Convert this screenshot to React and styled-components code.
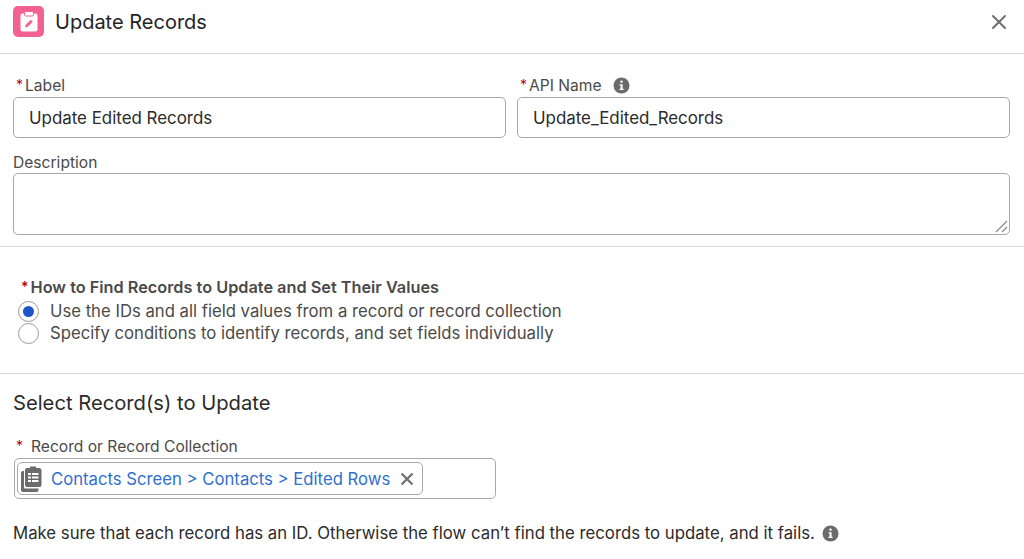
import React from "react";
import styled, { createGlobalStyle } from "styled-components";

const Global = createGlobalStyle`
	html, body {
		margin: 0;
		padding: 0;
		background: #fff;
	}
	body {
		font-family: Inter, "Liberation Sans", sans-serif;
		color: #2b2b2b;
		overflow: hidden;
	}
`;

const Page = styled.div`
	width: 1024px;
	height: 559px;
	overflow: hidden;
	background: #fff;
`;

const Header = styled.header`
	height: 54px;
	box-sizing: border-box;
	border-bottom: 1px solid #d8d8d8;
	padding: 6px 17px 0 13px;
	display: flex;
	align-items: flex-start;
	gap: 11px;
`;

const IconTile = styled.div`
	width: 31px;
	height: 31px;
	flex: none;
	border-radius: 5px;
	background: #f2618f;
	display: flex;
	align-items: center;
	justify-content: center;
`;

const Title = styled.h1`
	flex: 1;
	margin: 0;
	font-size: 20px;
	font-weight: 400;
	line-height: 33px;
	color: #242424;
`;

const CloseButton = styled.button`
	border: 0;
	background: none;
	padding: 0;
	margin-top: 8px;
	width: 16px;
	height: 16px;
	display: block;
`;

const Section = styled.section`
	padding: ${(p) => p.$padding};
	border-bottom: ${(p) => (p.$divided ? "1px solid #d8d8d8" : "0")};
`;

const FieldRow = styled.div`
	display: grid;
	grid-template-columns: 493px 493px;
	gap: 11px;
	margin-bottom: ${(p) => p.$gap || "0"};
`;

const Label = styled.label`
	display: flex;
	align-items: center;
	height: 22px;
	font-size: 15.6px;
	color: #4a4a4a;
	margin-bottom: ${(p) => p.$gap || "1px"};
`;

const Required = styled.span`
	color: #ba0517;
	font-size: 14px;
	line-height: 1;
	margin-left: 3px;
	margin-right: ${(p) => p.$space || "2px"};
`;

const Input = styled.div`
	height: 41px;
	box-sizing: border-box;
	border: 1px solid #a8a8a8;
	border-radius: 5px;
	padding-left: 15px;
	display: flex;
	align-items: center;
	font-size: 16.9px;
	color: #2b2b2b;
`;

const TextArea = styled.div`
	position: relative;
	width: 997px;
	height: 62px;
	box-sizing: border-box;
	border: 1px solid #a8a8a8;
	border-radius: 5px;
`;

const Grip = styled.svg`
	position: absolute;
	right: 1px;
	bottom: 1px;
`;

const GroupHeading = styled.div`
	display: flex;
	align-items: center;
	height: 20px;
	font-size: 16.3px;
	font-weight: 600;
	color: #4a4a4a;
	margin-left: 5px;
	margin-bottom: 3px;
`;

const RadioRow = styled.div`
	display: flex;
	align-items: center;
	height: 22px;
	gap: 11px;
	padding-left: 5px;
	font-size: 16.7px;
	color: #4a4a4a;
`;

const Radio = styled.span`
	width: 21px;
	height: 21px;
	box-sizing: border-box;
	border: 1px solid #9a9a9a;
	border-radius: 50%;
	flex: none;
	display: flex;
	align-items: center;
	justify-content: center;

	&::after {
		content: "";
		display: ${(p) => (p.$checked ? "block" : "none")};
		width: 11px;
		height: 11px;
		border-radius: 50%;
		background: #1f55c9;
	}
`;

const SectionTitle = styled.h2`
	margin: 0 0 18px;
	font-size: 20.2px;
	line-height: 28px;
	font-weight: 400;
	color: #2b2b2b;
`;

const PillBox = styled.div`
	width: 482px;
	height: 41px;
	box-sizing: border-box;
	margin-left: 1px;
	border: 1px solid #a8a8a8;
	border-radius: 5px;
	padding: 3px 2px;
`;

const Pill = styled.div`
	display: flex;
	align-items: center;
	height: 33px;
	width: 406px;
	box-sizing: border-box;
	border: 1px solid #a8a8a8;
	border-radius: 5px;
	padding-left: 3px;
	gap: 7px;
	font-size: 16.7px;
	color: #2f6fce;
	white-space: nowrap;
`;

const PillClose = styled.svg`
	flex: none;
	margin-left: 3px;
`;

const Help = styled.p`
	display: flex;
	align-items: center;
	gap: 7px;
	margin: 23px 0 0;
	height: 22px;
	font-size: 16.75px;
	white-space: nowrap;
	color: #2b2b2b;
`;

const InfoGap = styled.span`
	width: 11px;
`;

const InfoSvg = styled.svg`
	flex: none;
`;

const Info = () => (
	<InfoSvg width="17" height="17" viewBox="0 0 17 17">
		<circle cx="8.5" cy="8.5" r="8" fill="#6b6b6b" />
		<rect x="7.4" y="3.6" width="2.2" height="2.2" rx="0.5" fill="#fff" />
		<path d="M6.6 7.2h3v4.6h1v1.3H6.5v-1.3h1.1V8.5h-1z" fill="#fff" />
	</InfoSvg>
);

const ClipboardEdit = () => (
	<svg width="18" height="21" viewBox="0 0 18 21">
		<rect x="0.5" y="2.5" width="17" height="18" rx="2" fill="#fff" />
		<rect x="4.5" y="0.5" width="9" height="4.5" rx="1.2" fill="#fff" stroke="#f2618f" strokeWidth="1" />
		<path d="M5 16.5l.6-2.5 5.2-5.2 1.9 1.9-5.2 5.2z" fill="#f2618f" />
	</svg>
);

const RecordsIcon = () => (
	<svg width="23" height="26" viewBox="0 0 23 26" style={{ flex: "none" }}>
		<path d="M0 7a2 2 0 0 1 2-2h1v16.5a1 1 0 0 0 1 1h13.5V24a2 2 0 0 1-2 2H2a2 2 0 0 1-2-2z" fill="#6b6b6b" />
		<path d="M6 2h3V0.5h6V2h3a2.5 2.5 0 0 1 2.5 2.5V19a2 2 0 0 1-2 2H6a2 2 0 0 1-2-2V4a2 2 0 0 1 2-2z" fill="#6b6b6b" />
		<path d="M7 7h10.5v2H7zM7 10.5h10.5v2H7zM7 14h10.5v2H7z" fill="#fff" />
		<path d="M10 7h1v9h-1z" fill="#6b6b6b" />
	</svg>
);

function App() {
	return (
		<Page>
			<Global />
			<Header>
				<IconTile>
					<ClipboardEdit />
				</IconTile>
				<Title>Update Records</Title>
				<CloseButton aria-label="Close">
					<svg width="16" height="16" viewBox="0 0 16 16">
						<path d="M2 2l12 12M14 2L2 14" stroke="#6f6f6f" strokeWidth="2" strokeLinecap="round" />
					</svg>
				</CloseButton>
			</Header>

			<Section $divided $padding="20px 14px 11px 13px">
				<FieldRow $gap="13px">
					<div>
						<Label>
							<Required>*</Required>Label
						</Label>
						<Input>Update Edited Records</Input>
					</div>
					<div>
						<Label>
							<Required>*</Required>API Name
							<InfoGap />
							<Info />
						</Label>
						<Input>Update_Edited_Records</Input>
					</div>
				</FieldRow>
				<Label $gap="0">Description</Label>
				<TextArea>
					<Grip width="14" height="14" viewBox="0 0 14 14">
						<path d="M2 13L13 2M8 13l5-5" stroke="#8a8a8a" strokeWidth="1.2" />
					</Grip>
				</TextArea>
			</Section>

			<Section $divided $padding="30px 13px 29px">
				<GroupHeading>
					<Required>*</Required>How to Find Records to Update and Set Their Values
				</GroupHeading>
				<RadioRow>
					<Radio $checked />
					Use the IDs and all field values from a record or record collection
				</RadioRow>
				<RadioRow>
					<Radio />
					Specify conditions to identify records, and set fields individually
				</RadioRow>
			</Section>

			<Section $padding="15px 13px 0">
				<SectionTitle>Select Record(s) to Update</SectionTitle>
				<Label>
					<Required $space="8px">*</Required>Record or Record Collection
				</Label>
				<PillBox>
					<Pill>
						<RecordsIcon />
						Contacts Screen &gt; Contacts &gt; Edited Rows
						<PillClose width="14" height="14" viewBox="0 0 14 14">
							<path d="M1.5 1.5l11 11M12.5 1.5l-11 11" stroke="#6f6f6f" strokeWidth="2.2" />
						</PillClose>
					</Pill>
				</PillBox>
				<Help>
					Make sure that each record has an ID. Otherwise the flow can’t find the records to update, and it fails.
					<Info />
				</Help>
			</Section>
		</Page>
	);
}

export default App;
